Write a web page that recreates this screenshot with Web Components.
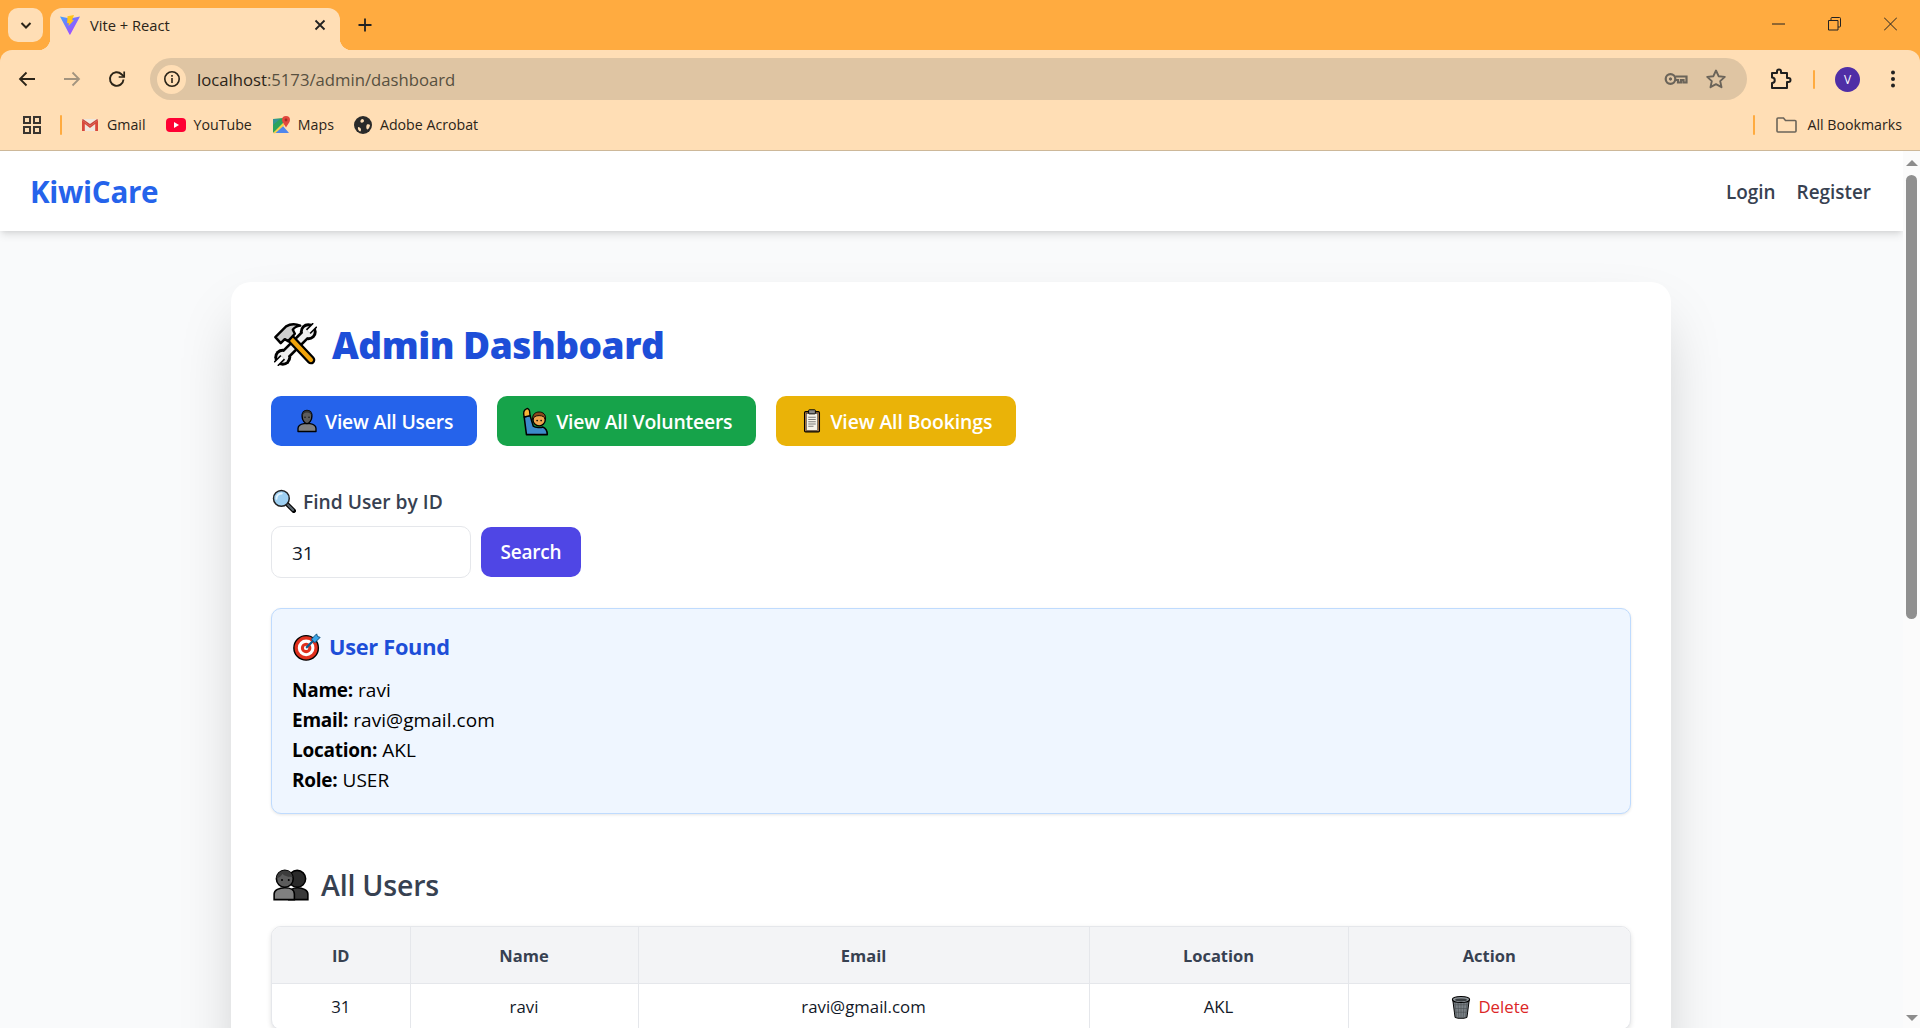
<!DOCTYPE html>
<html lang="en">
<head>
<meta charset="utf-8">
<title>Vite + React</title>
<style>
  html, body { margin: 0; height: 100%; overflow: hidden; }
  body {
    display: flex;
    flex-direction: column;
    font-family: "Open Sans", "Noto Sans", sans-serif;
    background: #f9fafb;
  }
</style>
</head>
<body>
<browser-chrome></browser-chrome>
<page-view>
  <site-nav></site-nav>
  <admin-panel></admin-panel>
</page-view>

<script>
const FONT = `"Open Sans", "Noto Sans", sans-serif`;

const ICONS = {
  tools: `<path d="M25 7 7 25" stroke="#000" stroke-width="8" stroke-linecap="round"/><circle cx="25.500" cy="6.500" r="6.300" fill="#000"/><circle cx="6.500" cy="25.500" r="6.300" fill="#000"/><path d="M25 7 7 25" stroke="#eee" stroke-width="4.200" stroke-linecap="round"/><circle cx="25.500" cy="6.500" r="4.100" fill="#eee"/><circle cx="6.500" cy="25.500" r="4.100" fill="#eee"/><path d="m25.500 6.500 5-5" stroke="#000" stroke-width="5"/><path d="m25.500 6.500 6-6" stroke="#fff" stroke-width="2.600"/><path d="m6.500 25.500-5 5" stroke="#000" stroke-width="5"/><path d="m6.500 25.500-6 6" stroke="#fff" stroke-width="2.600"/><path d="M11 10 27.500 27.500" stroke="#000" stroke-width="6.500" stroke-linecap="round"/><path d="M11 10 27.500 27.500" stroke="#f0a30a" stroke-width="3.200" stroke-linecap="round"/><path d="M1 10.500 9 2.500c3-1.800 7-2 10.500-.5-2.500.5-4.500 1.500-5.500 3l1.500 3-5 5.500-2.500-1.500-3 3z" fill="#cfcfcf" stroke="#000" stroke-width="1.800" stroke-linejoin="round"/>`,
  bust: `<path d="M4 30v-4c0-4 5-6 8-6.500h8c3 .5 8 2.500 8 6.500v4z" fill="#808080" stroke="#000" stroke-width="1.800" stroke-linejoin="round"/><path d="M9.500 10C9.500 5 12 2 16 2s6.500 3 6.500 8c0 5-3.500 9.500-6.500 9.500S9.500 15 9.500 10z" fill="#5c5c5c" stroke="#000" stroke-width="1.800"/><path d="M9.500 10c1-4 3-5.500 6.500-5.500s5.500 1.500 6.500 5.500c0-5-2.500-8-6.500-8s-6.500 3-6.500 8z" fill="#333"/><circle cx="13.300" cy="11" r="1" fill="#111"/><circle cx="18.700" cy="11" r="1" fill="#111"/>`,
  raise: `<path d="M6 30.500 3.500 11 10 9.500l3.500 11.500c2.500 2 8.500 2 10.500 1 3 1 5 4 5 8.500z" fill="#3c8ac9" stroke="#000" stroke-width="1.700" stroke-linejoin="round"/><path d="M3.500 11C2.500 7 3 3 6 2c1.500-1 3.500 1 3.500 3l.5 4.500z" fill="#f5b537" stroke="#000" stroke-width="1.500" stroke-linejoin="round"/><circle cx="20" cy="14" r="6.800" fill="#eea44e" stroke="#000" stroke-width="1.500"/><path d="M13 14c-1-6 3-8.500 7-8.500s8 2.500 7 8.500c-1-3-3-4.500-7-4.500s-6 1.500-7 4.500z" fill="#8a4a1c" stroke="#000" stroke-width="1"/><circle cx="17.800" cy="15" r=".9" fill="#000"/><circle cx="22.200" cy="15" r=".9" fill="#000"/>`,
  clipboard: `<rect x="6" y="3.500" width="20" height="27" rx="1.500" fill="#a9753f" stroke="#000" stroke-width="1.400"/><rect x="8.500" y="6" width="15" height="22.500" fill="#f6f3ea" stroke="#333" stroke-width=".7"/><rect x="11.500" y="1" width="9" height="5.500" rx="1" fill="#8a8a8a" stroke="#000" stroke-width="1.200"/><path d="M11 11h10M11 14h10M11 17h10M11 20h10M11 23h7" stroke="#777" stroke-width="1.300"/>`,
  search: `<path d="M19 19 29 29" stroke="#000" stroke-width="6" stroke-linecap="round"/><path d="M20 20 28 28" stroke="#5c6770" stroke-width="3" stroke-linecap="round"/><circle cx="12.500" cy="12.500" r="10.500" fill="#9ed0f2" stroke="#222" stroke-width="2"/><path d="M6 13c0-4 3-7 7-7" stroke="#e3f3fd" stroke-width="2.500" fill="none" stroke-linecap="round"/>`,
  target: `<circle cx="15" cy="17" r="14" fill="#e0301e" stroke="#000" stroke-width="1.600"/><circle cx="15" cy="17" r="9.500" fill="#fff"/><circle cx="15" cy="17" r="6" fill="#e0301e"/><circle cx="15" cy="17" r="2.500" fill="#fff"/><path d="M15 17 25 7" stroke="#135a8c" stroke-width="2.500"/><path d="M21 7 27 1l1 3 3 1-6 6z" fill="#3aa5e8" stroke="#0e4f7c" stroke-width="1.100"/>`,
  busts: `<path d="M14 29v-5c0-3.500 4-5.500 8-5.500s9 2 9 5.500v5z" fill="#3a3a3a" stroke="#000" stroke-width="1.400"/><circle cx="21.500" cy="10.500" r="7.500" fill="#2a2a2a" stroke="#000" stroke-width="1.400"/><path d="M1 29v-5c0-3.500 4.500-5.500 9.500-5.500s8.500 2 8.500 5.500v5z" fill="#808080" stroke="#000" stroke-width="1.400"/><circle cx="10.500" cy="10.500" r="7.500" fill="#5c5c5c" stroke="#000" stroke-width="1.400"/><path d="M3 10c1-5 4-7 8-7s6 3 6.500 6c-3 0-8-1-9-3-1 2-3 3.500-5.500 4z" fill="#3c3c3c"/><circle cx="8" cy="11.500" r=".9" fill="#000"/><circle cx="14" cy="11.500" r=".9" fill="#000"/>`,
  trash: `<path d="M5 6 8 29c0 1.500 4 2 8 2s8-.5 8-2l3-23z" fill="#7b8287" stroke="#000" stroke-width="1.400"/><path d="M8 9l2 20M12 9l1 21M16 9v21M20 9l-1 21M24 9l-2 20M6 13h20M7 18h18M7 23h18" stroke="#4a4f52" stroke-width=".8"/><ellipse cx="16" cy="6" rx="11.500" ry="4" fill="#8d9499" stroke="#000" stroke-width="1.400"/><ellipse cx="16" cy="6.500" rx="8" ry="2" fill="#3c4043"/>`
};

class AppEmoji extends HTMLElement {
  connectedCallback() {
    if (this.shadowRoot) return;
    const size = this.getAttribute('size') || 22;
    this.attachShadow({ mode: 'open' }).innerHTML = `
      <style>:host { display: inline-flex; flex: none; } svg { display: block; }</style>
      <svg width="${size}" height="${size}" viewBox="0 0 32 32" fill="none" aria-hidden="true">${ICONS[this.getAttribute('name')]}</svg>`;
  }
}

class BrowserChrome extends HTMLElement {
  connectedCallback() {
    if (this.shadowRoot) return;
    this.attachShadow({ mode: 'open' }).innerHTML = `
      <style>
        :host { display: block; flex: none; background: #ffab40; font-family: "Segoe UI", ${FONT}; color: #2b2418; }
        svg { display: block; flex: none; }
        .strip { height: 50px; display: flex; align-items: flex-end; padding-left: 8px; }
        .tabs-btn { width: 35px; height: 34px; margin-bottom: 8px; border-radius: 10px; background: #ffdeb5; display: flex; align-items: center; justify-content: center; }
        .tab { position: relative; width: 290px; height: 42px; margin-left: 7px; box-sizing: border-box; padding: 0 13px 8px 10px; background: #ffdeb5; border-radius: 12px 12px 0 0; display: flex; align-items: center; font-size: 14.700px; }
        .tab::before, .tab::after { content: ""; position: absolute; bottom: 0; width: 12px; height: 12px; }
        .tab::before { left: -12px; background: radial-gradient(circle at 0 0, transparent 12px, #ffdeb5 12.500px); }
        .tab::after { right: -12px; background: radial-gradient(circle at 100% 0, transparent 12px, #ffdeb5 12.500px); }
        .tab .title { margin-left: 10px; flex: 1; white-space: nowrap; }
        .plus { margin: 0 0 18px 18px; }
        .win { margin-left: auto; align-self: flex-start; display: flex; padding: 17px 23px 0 0; gap: 43px; }
        .toolbar { height: 50px; box-sizing: border-box; padding: 8px 18px 0 17px; background: #ffdeb5; border-radius: 12px 12px 0 0; display: flex; align-items: center; }
        .nav-icons { display: flex; gap: 25px; }
        .omni { flex: 1; height: 42px; margin: 0 23px 0 23px; background: #dfc5a3; border-radius: 21px; display: flex; align-items: center; padding: 0 20px 0 7px; font-size: 16.700px; color: #57503f; }
        .chip { width: 29px; height: 29px; border-radius: 50%; background: #ffdeb5; display: flex; align-items: center; justify-content: center; margin-right: 11px; }
        .host { color: #2b2418; }
        .omni .end { margin-left: auto; display: flex; align-items: center; gap: 17px; }
        .sep { width: 2px; height: 19px; border-radius: 1px; background: #ffab40; flex: none; }
        .avatar { width: 25px; height: 25px; border-radius: 50%; background: #4f2ea6; color: #fff; font-size: 12px; display: flex; align-items: center; justify-content: center; margin-left: -1px; }
        .tools { display: flex; align-items: center; gap: 21px; }
        .dots { margin-left: 3px; }
        .marks { height: 50px; box-sizing: content-box; background: #ffdeb5; border-bottom: 1px solid #cdb899; display: flex; align-items: center; padding: 0 18px 0 23px; font-size: 14.200px; }
        .marks .sep { height: 20px; margin: 0 19px 0 19px; }
        .mark { display: flex; align-items: center; gap: 8px; margin-right: 20px; white-space: nowrap; padding-bottom: 1px; }
        .end-marks { margin-left: auto; display: flex; align-items: center; }
        .end-marks .sep { margin: 0 21px 0 0; }
      </style>
      <div class="strip">
        <div class="tabs-btn"><svg width="14" height="14" viewBox="0 0 14 14" fill="none"><path d="m2.500 5 4.500 4.500L11.500 5" stroke="#2b2418" stroke-width="2"/></svg></div>
        <div class="tab">
          <svg width="20" height="20" viewBox="0 0 20 20"><defs><linearGradient id="v" x1="0" y1="0" x2="1" y2="1"><stop offset="0" stop-color="#41a5ff"/><stop offset="1" stop-color="#bd34fe"/></linearGradient></defs><path d="M0 1.500 10 3.400 20 1.500 10.300 19.500q-.4.500-.8 0z" fill="url(#v)"/><path d="M14 0 7.500 1.300l-.4 7 1.800-.4-.4 3L14 5l-2 .3z" fill="#ffc517"/></svg>
          <span class="title">Vite + React</span>
          <svg width="14" height="14" viewBox="0 0 14 14"><path d="m2.500 2.500 9 9m0-9-9 9" stroke="#222" stroke-width="1.800"/></svg>
        </div>
        <svg class="plus" width="14" height="14" viewBox="0 0 14 14"><path d="M7 .5v13M.5 7h13" stroke="#222" stroke-width="1.800"/></svg>
        <div class="win">
          <svg width="13" height="14" viewBox="0 0 13 14"><path d="M0 7h13" stroke="#222"/></svg>
          <svg width="13" height="14" viewBox="0 0 13 14" fill="none"><path d="M.5 3.500h9.500v9.500H.5zM3 3.500V1.500q0-1 1-1h7.500q1 0 1 1V9q0 1-1 1H10" stroke="#222"/></svg>
          <svg width="13" height="14" viewBox="0 0 13 14"><path d="m0 .5 13 13m0-13-13 13" stroke="#222"/></svg>
        </div>
      </div>
      <div class="toolbar">
        <div class="nav-icons">
          <svg width="20" height="20" viewBox="0 0 20 20" fill="none" stroke="#2b2418" stroke-width="1.800"><path d="M18 10H3M9.500 3.500 3 10l6.500 6.500"/></svg>
          <svg width="20" height="20" viewBox="0 0 20 20" fill="none" stroke="#a3947f" stroke-width="1.800"><path d="M2 10h15M10.500 3.500 17 10l-6.500 6.500"/></svg>
          <svg width="20" height="20" viewBox="0 0 20 20" fill="none" stroke="#2b2418" stroke-width="1.900"><path d="M16.500 10.500a6.800 6.800 0 1 1-2-5.300L17 7.500"/><path d="M17.200 2.500v5.500h-5.500" stroke-width="1.700"/></svg>
        </div>
        <div class="omni">
          <span class="chip"><svg width="18" height="18" viewBox="0 0 18 18" fill="none" stroke="#2b2418" stroke-width="1.600"><circle cx="9" cy="9" r="7.200"/><path d="M9 8v5M9 5v1.800"/></svg></span>
          <span><span class="host">localhost</span>:5173/admin/dashboard</span>
          <span class="end">
            <svg width="24" height="24" viewBox="0 0 24 24" fill="none" stroke="#6b6459" stroke-width="2.200"><circle cx="6.500" cy="12" r="4.800"/><circle cx="6.500" cy="12" r="1.200" fill="#6b6459" stroke-width="1"/><path d="M11.300 9.500h11.200v6h-3v-2.500h-2.500v2.500h-3v-2.500h-2.700"/></svg>
            <svg width="22" height="22" viewBox="0 0 22 22" fill="none" stroke="#6b6459" stroke-width="1.900"><path d="m11 2.500 2.600 5.700 6.200.7-4.600 4.200 1.300 6.100L11 16.100l-5.500 3.100 1.300-6.100-4.600-4.200 6.200-.7z" stroke-linejoin="round"/></svg>
          </span>
        </div>
        <div class="tools">
          <svg width="22" height="22" viewBox="0 0 22 22" fill="none" stroke="#1f1f1f" stroke-width="2"><path d="M2 5h5V3.500a2 2 0 0 1 4 0V5h6v5h1.500a2 2 0 0 1 0 4H17v6H2v-5a2.500 2.500 0 0 0 0-5.500z" stroke-linejoin="round"/></svg>
          <span class="sep"></span>
          <span class="avatar">V</span>
          <svg class="dots" width="18" height="22" viewBox="0 0 18 22" fill="#222"><circle cx="9" cy="4.500" r="2"/><circle cx="9" cy="11" r="2"/><circle cx="9" cy="17.500" r="2"/></svg>
        </div>
      </div>
      <div class="marks">
        <svg width="18" height="18" viewBox="0 0 18 18" fill="none" stroke="#3a3530" stroke-width="2"><path d="M1 1h6v6H1zM11 1h6v6h-6zM1 11h6v6H1zM11 11h6v6h-6z"/></svg>
        <span class="sep"></span>
        <span class="mark"><svg width="18" height="14" viewBox="0 0 18 14"><path d="M1 1h16v12H1z" fill="#f0e7dc"/><path d="M1 13V2l8 6 8-6v11h-2.800V6L9 10 3.800 6v7z" fill="#d9483b"/><path d="M1 2 9 8l8-6-.8-1L9 6 1.800 1z" fill="#c9443a"/></svg>Gmail</span>
        <span class="mark"><svg width="20" height="14" viewBox="0 0 20 14"><rect width="20" height="14" rx="4" fill="#ff0033"/><path d="m8 4 5 3-5 3z" fill="#fff"/></svg>YouTube</span>
        <span class="mark"><svg width="18" height="18" viewBox="0 0 18 18"><path d="M1 3 11 2v8L1 17z" fill="#2aa35c"/><path d="M1 17 11 10l6 7z" fill="#4f86ec"/><path d="M1 17 11 7l1.500 2L3 17.500z" fill="#f7d046"/><path d="M1 3h7L1 9z" fill="#3f80e6" opacity=".4"/><path d="M14 0a4 4 0 0 0-4 4c0 2.500 3 5 4 7.500 1-2.500 4-5 4-7.500a4 4 0 0 0-4-4z" fill="#e2483d"/><circle cx="14" cy="4" r="1.400" fill="#a32c24"/></svg>Maps</span>
        <span class="mark"><svg width="18" height="18" viewBox="0 0 18 18"><circle cx="9" cy="9" r="9" fill="#2a2a2a"/><path d="M8.500 3c1.500.5 2 2 1 3S7 7 6.500 6 7 3 8.500 3zM13 8.500c1.500-.5 2.500 0 3 .5-.3 2-1 3.500-2.500 4.500-1.500-.5-1.500-4 -.5-5zM4 11c1.500 0 3 1 3 2.500S6.500 15.500 6 15.500C4.500 14.500 3.500 13 4 11z" fill="#ffdeb5"/></svg>Adobe Acrobat</span>
        <span class="end-marks">
          <span class="sep"></span>
          <span class="mark" style="margin:0;gap:10px"><svg width="21" height="18" viewBox="0 0 21 18" fill="none" stroke="#6b6459" stroke-width="1.600"><path d="M1 15V3q0-1 1-1h5.500l2 2.500H19q1 0 1 1V15q0 1-1 1H2q-1 0-1-1z"/></svg>All Bookmarks</span>
        </span>
      </div>`;
  }
}

// page area: the scrolled document plus the classic scrollbar at the right
class PageView extends HTMLElement {
  connectedCallback() {
    if (this.shadowRoot) return;
    this.attachShadow({ mode: 'open' }).innerHTML = `
      <style>
        :host { display: flex; flex: 1; min-height: 0; overflow: hidden; }
        .doc { flex: 1; min-width: 0; background: #f9fafb; overflow: hidden; }
        .bar { width: 17px; flex: none; background: #fbfbfb; padding: 9px 0 7px; box-sizing: border-box; display: flex; flex-direction: column; }
        .arrow { width: 0; height: 0; margin: 0 auto 9px; border: 6.500px solid transparent; border-top: 0; border-bottom: 6.500px solid #8c8c8c; }
        .arrow.down { margin: auto auto 0; border-bottom: 0; border-top: 6.500px solid #8c8c8c; }
        .thumb { width: 11px; height: 444px; margin: 0 auto; border-radius: 6px; background: #8f8f8f; }
      </style>
      <div class="doc"><slot></slot></div>
      <div class="bar"><div class="arrow"></div><div class="thumb"></div><div class="arrow down"></div></div>`;
  }
}

class SiteNav extends HTMLElement {
  connectedCallback() {
    if (this.shadowRoot) return;
    this.attachShadow({ mode: 'open' }).innerHTML = `
      <style>
        :host { display: flex; position: relative; height: 80px; padding: 1px 32px 0 30px; box-sizing: border-box; align-items: center; justify-content: space-between; background: #fff; box-shadow: 0 5px 8px -1px rgba(0,0,0,.1), 0 2px 5px -2px rgba(0,0,0,.1); font-family: ${FONT}; }
        .brand { font-size: 29.600px; font-weight: 700; color: #2563eb; letter-spacing: -.3px; }
        .links { display: flex; gap: 21px; font-size: 18.900px; font-weight: 600; color: #374151; }
      </style>
      <span class="brand">KiwiCare</span>
      <span class="links"><span>Login</span><span>Register</span></span>`;
  }
}

class ActionButton extends HTMLElement {
  connectedCallback() {
    if (this.shadowRoot) return;
    this.attachShadow({ mode: 'open' }).innerHTML = `
      <style>
        :host { display: inline-flex; height: 50px; box-sizing: border-box; padding: 0 24px; gap: 6px; align-items: center; border-radius: 10px; color: #fff; font-size: 19.400px; font-weight: 600; letter-spacing: var(--btn-ls, -.2px); background: var(--btn-bg, #2563eb); white-space: nowrap; }
      </style>
      <slot></slot>`;
  }
}

class UserFound extends HTMLElement {
  connectedCallback() {
    if (this.shadowRoot) return;
    this.attachShadow({ mode: 'open' }).innerHTML = `
      <style>
        :host { display: block; margin-top: 30px; padding: 19px 20px 18px; border: 1px solid #bfdbfe; border-radius: 10px; background: #eff6ff; box-shadow: 0 1px 3px rgba(0,0,0,.1); color: #000; font-size: 19px; }
        h3 { margin: 0 0 10px; height: 37px; display: flex; align-items: center; gap: 8px; font-size: 21.800px; font-weight: 700; letter-spacing: -.3px; color: #1d4ed8; }
        h3 app-emoji { margin-left: 1px; }
        p { margin: 0; line-height: 30px; letter-spacing: .05px; }
        b { font-weight: 700; letter-spacing: -.25px; }
      </style>
      <h3><app-emoji name="target" size="28"></app-emoji>User Found</h3>
      <p><b>Name:</b> ravi</p>
      <p><b>Email:</b> ravi@gmail.com</p>
      <p><b>Location:</b> AKL</p>
      <p><b>Role:</b> USER</p>`;
  }
}

class UsersTable extends HTMLElement {
  connectedCallback() {
    if (this.shadowRoot) return;
    this.attachShadow({ mode: 'open' }).innerHTML = `
      <style>
        :host { display: block; border: 1px solid #e5e7eb; border-radius: 10px; overflow: hidden; background: #fff; box-shadow: 0 2px 5px rgba(0,0,0,.12); font-size: 16.800px; color: #111827; }
        table { width: 100%; border-collapse: collapse; table-layout: fixed; }
        th, td { border: 1px solid #e5e7eb; text-align: center; padding: 0 5px; }
        tr > :first-child { border-left: 0; }
        tr > :last-child { border-right: 0; }
        th { height: 56px; background: #f3f4f6; color: #374151; font-size: 16.500px; font-weight: 700; border-top: 0; }
        td { height: 44px; }
        .del { display: inline-flex; align-items: center; gap: 5px; color: #dc2626; font-weight: 500; vertical-align: middle; }
      </style>
      <table>
        <colgroup><col style="width:138px"><col style="width:228px"><col style="width:451px"><col style="width:259px"><col></colgroup>
        <thead><tr><th>ID</th><th>Name</th><th>Email</th><th>Location</th><th>Action</th></tr></thead>
        <tbody><tr><td>31</td><td>ravi</td><td>ravi@gmail.com</td><td>AKL</td>
          <td><span class="del"><app-emoji name="trash" size="24"></app-emoji>Delete</span></td></tr></tbody>
      </table>`;
  }
}

class AdminPanel extends HTMLElement {
  connectedCallback() {
    if (this.shadowRoot) return;
    this.attachShadow({ mode: 'open' }).innerHTML = `
      <style>
        :host { display: block; box-sizing: border-box; width: 1440px; margin: 51px 0 0 231px; padding: 40px; background: #fff; border-radius: 20px; box-shadow: 0 31px 62px -15px rgba(0,0,0,.25); font-family: ${FONT}; }
        h1 { margin: 0 0 29px; height: 45px; display: flex; align-items: center; gap: 15px; font-size: 37px; font-weight: 800; letter-spacing: -.5px; color: #1d4ed8; white-space: nowrap; }
        h1 app-emoji { margin-left: 3px; }
        .actions { display: flex; gap: 20px; }
        label { display: flex; align-items: center; gap: 7px; margin: 40px 0 10px; height: 30px; font-size: 19.200px; font-weight: 600; color: #374151; }
        label app-emoji { margin-left: 1px; }
        .find { display: flex; align-items: center; gap: 10px; }
        input { width: 200px; height: 52px; box-sizing: border-box; padding: 1px 20px 0; border: 1px solid #e5e7eb; border-radius: 10px; font: 400 19px ${FONT}; color: #111827; outline: none; }
        .go { width: 100px; height: 50px; border-radius: 10px; background: #4f46e5; color: #fff; display: flex; align-items: center; justify-content: center; font-size: 19px; font-weight: 600; letter-spacing: -.2px; }
        h2 { margin: 52px 0 22px; height: 38px; display: flex; align-items: center; gap: 12px; font-size: 28.500px; font-weight: 600; letter-spacing: -.2px; color: #374151; }
        h2 app-emoji { margin-left: 2px; }
      </style>
      <h1><app-emoji name="tools" size="43"></app-emoji>Admin Dashboard</h1>
      <div class="actions">
        <action-button><app-emoji name="bust" size="24"></app-emoji>View All Users</action-button>
        <action-button style="--btn-bg:#16a34a"><app-emoji name="raise" size="29"></app-emoji>View All Volunteers</action-button>
        <action-button style="--btn-bg:#eab308;--btn-ls:-.1px"><app-emoji name="clipboard" size="24"></app-emoji>View All Bookings</action-button>
      </div>
      <label><app-emoji name="search" size="24"></app-emoji>Find User by ID</label>
      <div class="find">
        <input type="text" value="31" aria-label="User ID">
        <div class="go">Search</div>
      </div>
      <user-found></user-found>
      <h2><app-emoji name="busts" size="36"></app-emoji>All Users</h2>
      <users-table></users-table>`;
  }
}

customElements.define('app-emoji', AppEmoji);
customElements.define('browser-chrome', BrowserChrome);
customElements.define('page-view', PageView);
customElements.define('site-nav', SiteNav);
customElements.define('action-button', ActionButton);
customElements.define('user-found', UserFound);
customElements.define('users-table', UsersTable);
customElements.define('admin-panel', AdminPanel);
</script>
</body>
</html>
